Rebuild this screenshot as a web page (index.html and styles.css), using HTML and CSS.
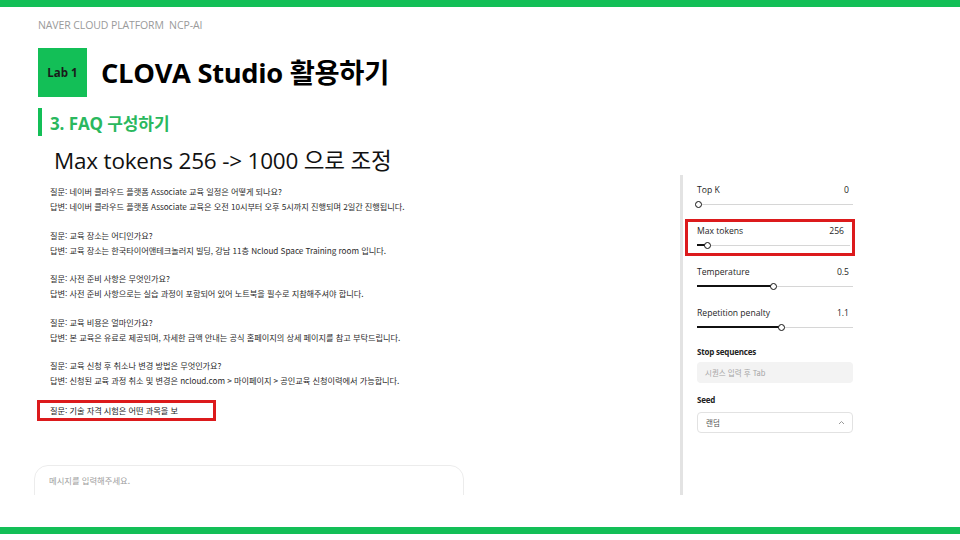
FILE: index.html
```html
<!DOCTYPE html>
<html lang="ko">
<head>
<meta charset="utf-8">
<title>CLOVA Studio 활용하기</title>
<link rel="stylesheet" href="styles.css">
</head>
<body>
<div class="slide">
  <div class="rule rule-top"></div>

  <div class="brand">NAVER CLOUD PLATFORM&nbsp; NCP-AI</div>

  <div class="title-row">
    <div class="lab">Lab 1</div>
    <h1 class="title">CLOVA Studio 활용하기</h1>
  </div>

  <div class="section">
    <span class="section-bar"></span>
    <span class="section-text">3. FAQ 구성하기</span>
  </div>

  <div class="main">
    <div class="chat">
      <p class="note">Max tokens 256 -&gt; 1000 으로 조정</p>

      <div class="faq">
        <div class="qa">
          <p>질문: 네이버 클라우드 플랫폼 Associate 교육 일정은 어떻게 되나요?</p>
          <p>답변: 네이버 클라우드 플랫폼 Associate 교육은 오전 10시부터 오후 5시까지 진행되며 2일간 진행됩니다.</p>
        </div>
        <div class="qa">
          <p>질문: 교육 장소는 어디인가요?</p>
          <p>답변: 교육 장소는 한국타이어앤테크놀러지 빌딩, 강남 11층 Ncloud Space Training room 입니다.</p>
        </div>
        <div class="qa">
          <p>질문: 사전 준비 사항은 무엇인가요?</p>
          <p>답변: 사전 준비 사항으로는 실습 과정이 포함되어 있어 노트북을 필수로 지참해주셔야 합니다.</p>
        </div>
        <div class="qa">
          <p>질문: 교육 비용은 얼마인가요?</p>
          <p>답변: 본 교육은 유료로 제공되며, 자세한 금액 안내는 공식 홈페이지의 상세 페이지를 참고 부탁드립니다.</p>
        </div>
        <div class="qa">
          <p>질문: 교육 신청 후 취소나 변경 방법은 무엇인가요?</p>
          <p>답변: 신청된 교육 과정 취소 및 변경은 ncloud.com &gt; 마이페이지 &gt; 공인교육 신청이력에서 가능합니다.</p>
        </div>
        <div class="qa-open">질문: 기술 자격 시험은 어떤 과목을 보</div>
      </div>

      <div class="composer-clip">
        <div class="composer">메시지를 입력해주세요.</div>
      </div>
    </div>

    <aside class="params">
      <div class="param">
        <div class="param-head"><span>Top K</span><span>0</span></div>
        <div class="slider"><span class="fill" style="width:1%"></span><span class="knob" style="left:1%"></span></div>
      </div>

      <div class="param param-marked">
        <div class="param-head"><span>Max tokens</span><span>256</span></div>
        <div class="slider"><span class="fill" style="width:7%"></span><span class="knob" style="left:7%"></span></div>
      </div>

      <div class="param">
        <div class="param-head"><span>Temperature</span><span>0.5</span></div>
        <div class="slider"><span class="fill" style="width:49%"></span><span class="knob" style="left:49%"></span></div>
      </div>

      <div class="param">
        <div class="param-head"><span>Repetition penalty</span><span>1.1</span></div>
        <div class="slider"><span class="fill" style="width:54%"></span><span class="knob" style="left:54%"></span></div>
      </div>

      <div class="field field-stop">
        <div class="field-label">Stop sequences</div>
        <div class="text-input">시퀀스 입력 후 Tab</div>
      </div>

      <div class="field">
        <div class="field-label field-label-seed">Seed</div>
        <div class="select">
          <span>랜덤</span>
          <svg class="caret" width="7" height="5" viewBox="0 0 7 5"><path d="M1 4 L3.5 1.5 L6 4" fill="none" stroke="#999" stroke-width="1"/></svg>
        </div>
      </div>
    </aside>
  </div>

  <div class="rule rule-bottom"></div>
</div>
</body>
</html>
```

FILE: styles.css
```css
* { box-sizing: border-box; }

html, body {
  margin: 0;
  padding: 0;
  background: #fff;
}

body {
  font-family: "Open Sans", "Noto Sans CJK KR", sans-serif;
  color: #000;
}

p { margin: 0; }

.slide {
  width: 960px;
  height: 540px;
  overflow: hidden;
  display: flex;
  flex-direction: column;
}

/* green rules framing the slide */
.rule {
  height: 7px;
  background: #13bf57;
  flex: none;
}
.rule-bottom { margin-top: 32px; }

.brand {
  margin: 10px 0 0 38px;
  height: 16px;
  line-height: 16px;
  font-size: 10.5px;
  color: #9a9a9a;
  letter-spacing: -0.1px;
}

.title-row {
  margin: 15px 0 0 38px;
  display: flex;
  align-items: center;
  height: 49px;
}

.lab {
  width: 49px;
  height: 49px;
  background: #13bf57;
  display: flex;
  align-items: center;
  justify-content: center;
  font-family: "Open Sans", sans-serif;
  font-weight: 700;
  font-size: 11.5px;
  color: #1a1a1a;
}

.title {
  margin: 0 0 0 14px;
  font-family: "Open Sans", "Noto Sans CJK KR", sans-serif;
  font-weight: 700;
  font-size: 27.3px;
  letter-spacing: -0.3px;
  line-height: 49px;
  color: #000;
}

.section {
  margin: 11px 0 0 38px;
  height: 28px;
  display: flex;
  align-items: center;
}

.section-bar {
  width: 4px;
  height: 28px;
  background: #13bf57;
}

.section-text {
  margin-left: 8px;
  font-weight: 700;
  font-size: 17px;
  color: #2ab85e;
  letter-spacing: -0.1px;
}

.main {
  margin-top: 12px;
  height: 347px;
  display: flex;
  align-items: flex-start;
}

.chat {
  margin-left: 34px;
  width: 430px;
  height: 347px;
  display: flex;
  flex-direction: column;
}

.note {
  margin-left: 20px;
  height: 26px;
  line-height: 26px;
  font-size: 22.5px;
  color: #111;
  letter-spacing: -0.2px;
}

.faq {
  margin-top: 10px;
  padding-left: 16px;
  font-family: "Noto Sans CJK KR", sans-serif;
  font-size: 8.2px;
  line-height: 15px;
  letter-spacing: -0.05px;
  color: #2b2b2b;
}

.qa { margin-bottom: 13.5px; }
.qa p {
  height: 15px;
  line-height: 15px;
  white-space: nowrap;
}

.qa-open {
  margin: -1.5px 0 0 -13px;
  width: 179px;
  height: 21px;
  padding-left: 10px;
  line-height: 15px;
  border: 3px solid #dc1a1c;
  color: #1a1a1a;
  white-space: nowrap;
}

.composer-clip {
  margin-top: 44px;
  height: 30px;
  overflow: hidden;
}

.composer {
  height: 60px;
  border: 1px solid #ececec;
  border-radius: 14px;
  padding: 8px 0 0 14px;
  font-family: "Noto Sans CJK KR", sans-serif;
  font-size: 8.3px;
  color: #9d9d9d;
}

/* parameter side panel */
.params {
  margin: 27px 0 0 216px;
  width: 173px;
  height: 320px;
  border-left: 3px solid #e3e3e3;
  padding: 9px 0 0 14px;
  font-family: "Open Sans", "Noto Sans CJK KR", sans-serif;
  font-size: 8.6px;
  color: #1e1e1e;
}

.param { margin-bottom: 13px; }

.param-head {
  display: flex;
  justify-content: space-between;
  height: 12px;
  line-height: 12px;
  padding-right: 4px;
}

.param-marked {
  margin-left: -12px;
  margin-right: -2px;
  padding: 3px 2px 0 9px;
  border: 3px solid #dc1a1c;
  margin-top: -6px;
  margin-bottom: 10px;
}
.param-marked .param-head { padding-right: 6px; }

.slider {
  position: relative;
  height: 16px;
}
.slider::before {
  content: "";
  position: absolute;
  left: 0;
  right: 0;
  top: 7.5px;
  height: 1px;
  background: #d6d6d6;
}
.slider .fill {
  position: absolute;
  left: 0;
  top: 7px;
  height: 2px;
  background: #111;
}
.slider .knob {
  position: absolute;
  top: 4.5px;
  width: 7px;
  height: 7px;
  margin-left: -3.5px;
  border: 1.5px solid #111;
  border-radius: 50%;
  background: #fff;
}

.field-stop { margin-top: -2px; }

.field-label {
  height: 12px;
  line-height: 12px;
  font-size: 8px;
  font-weight: 700;
  color: #222;
  letter-spacing: -0.2px;
}

.text-input {
  margin-top: 4px;
  height: 21px;
  line-height: 21px;
  padding-left: 8px;
  border-radius: 4px;
  background: #f3f3f3;
  font-family: "Noto Sans CJK KR", sans-serif;
  font-size: 7.5px;
  color: #a5a5a5;
}

.field-label-seed { margin-top: 11px; }

.select {
  margin-top: 6px;
  height: 21px;
  padding: 0 7px 0 8px;
  border: 1px solid #e2e2e2;
  border-radius: 4px;
  display: flex;
  align-items: center;
  justify-content: space-between;
  font-family: "Noto Sans CJK KR", sans-serif;
  font-size: 7.5px;
  color: #555;
}
```
